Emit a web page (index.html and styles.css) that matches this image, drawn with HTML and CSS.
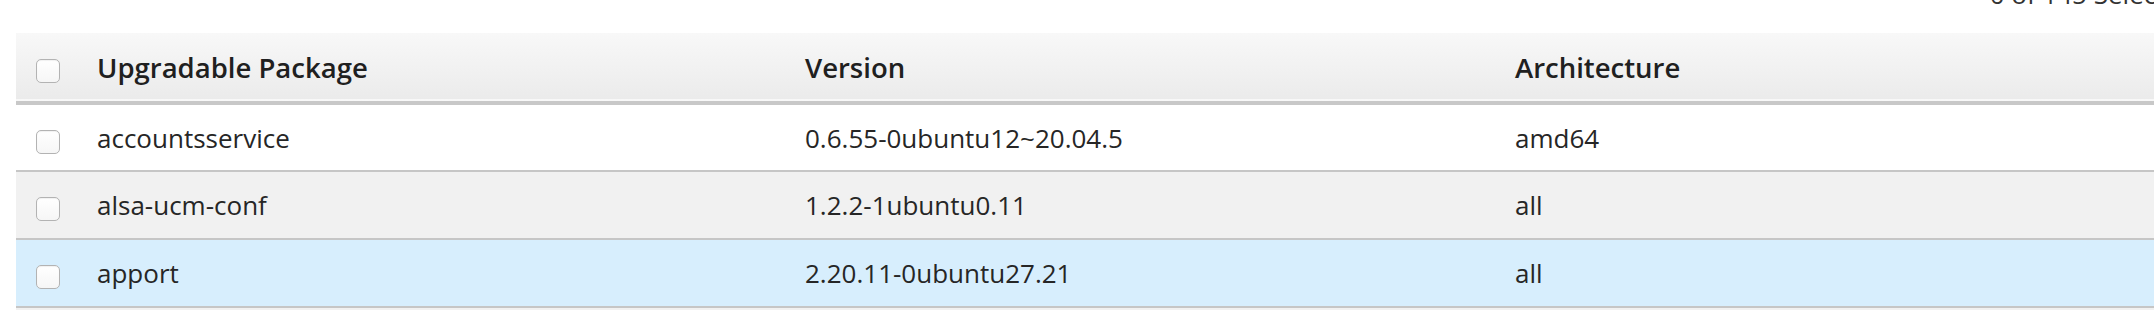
FILE: index.html
```html
<!DOCTYPE html>
<html lang="en">
<head>
  <meta charset="UTF-8" />
  <title>Software Updates</title>
  <link rel="stylesheet" href="styles.css">
</head>
<body>
  <div class="wrapper">
    <div class="toolbar">
      <span class="count">0 of 145 Selected</span>
    </div>

    <table class="pkg-table">
      <colgroup>
        <col class="col-check">
        <col class="col-name">
        <col class="col-version">
        <col class="col-arch">
      </colgroup>
      <thead>
        <tr>
          <th class="check-cell"><span class="checkbox"></span></th>
          <th>Upgradable Package</th>
          <th>Version</th>
          <th>Architecture</th>
        </tr>
      </thead>
      <tbody>
        <tr>
          <td class="check-cell"><span class="checkbox"></span></td>
          <td>accountsservice</td>
          <td>0.6.55-0ubuntu12~20.04.5</td>
          <td>amd64</td>
        </tr>
        <tr class="odd">
          <td class="check-cell"><span class="checkbox"></span></td>
          <td>alsa-ucm-conf</td>
          <td>1.2.2-1ubuntu0.11</td>
          <td>all</td>
        </tr>
        <tr class="hover">
          <td class="check-cell"><span class="checkbox"></span></td>
          <td>apport</td>
          <td>2.20.11-0ubuntu27.21</td>
          <td>all</td>
        </tr>
        <tr class="odd">
          <td class="check-cell"><span class="checkbox"></span></td>
          <td>apt</td>
          <td>2.0.9</td>
          <td>amd64</td>
        </tr>
      </tbody>
    </table>
  </div>
</body>
</html>
```

FILE: styles.css
```css
* {
  box-sizing: border-box;
  margin: 0;
  padding: 0;
}

html, body {
  height: 100%;
  overflow: hidden;
  background-color: #ffffff;
  font-family: 'Open Sans', sans-serif;
  color: #262626;
}

.wrapper {
  width: 2208px;
  margin-left: 16px;
}

.toolbar {
  height: 33px;
  display: flex;
  justify-content: flex-end;
  padding-right: 28px;
}

.count {
  display: block;
  font-size: 26px;
  line-height: 26px;
  margin-top: -19px;
  color: #333;
}

.pkg-table {
  width: 2208px;
  table-layout: fixed;
  border-collapse: collapse;
  font-size: 26px;
}

.col-check {
  width: 81px;
}

.col-name {
  width: 708px;
}

.col-version {
  width: 710px;
}

.pkg-table th,
.pkg-table td {
  text-align: left;
  vertical-align: middle;
  padding: 0;
  white-space: nowrap;
}

.pkg-table thead tr {
  height: 70px;
  background: linear-gradient(#f8f8f8, #ebebeb);
  border-bottom: 4px solid #c8c8c8;
}

.pkg-table th {
  font-size: 27.5px;
  font-weight: 600;
  color: #202020;
}

.pkg-table tbody tr {
  height: 68px;
  border-bottom: 2px solid #c6c6c6;
  background-color: #ffffff;
}

.pkg-table tbody tr.odd {
  background-color: #f1f1f1;
}

.pkg-table tbody tr.hover {
  background-color: #d7eefd;
}

.check-cell {
  padding-left: 20px !important;
}

.checkbox {
  display: block;
  width: 24px;
  height: 24px;
  margin-top: 8px;
  border: 1px solid #b3b3b3;
  border-radius: 5px;
  background: linear-gradient(#ffffff, #f6f6f6);
  box-shadow: inset 0 1px 1px rgba(0, 0, 0, 0.06);
}
```
